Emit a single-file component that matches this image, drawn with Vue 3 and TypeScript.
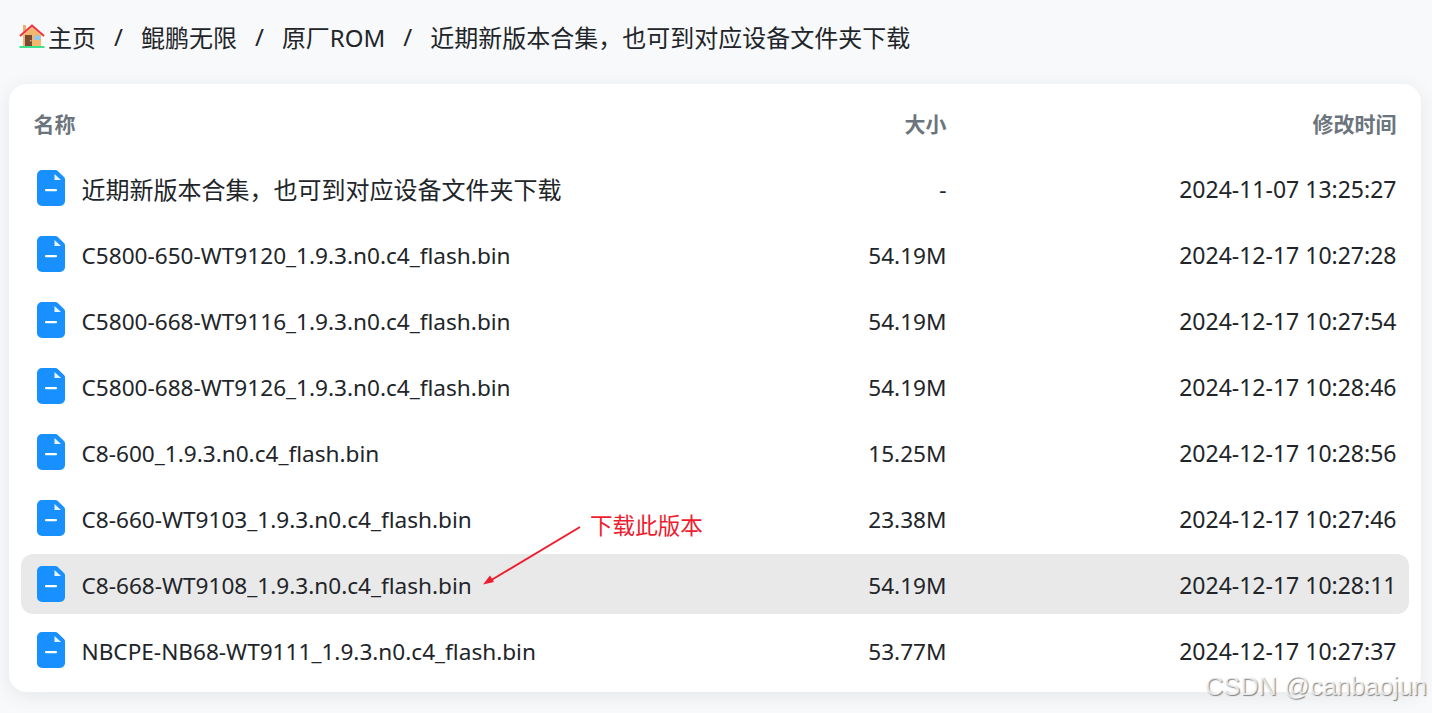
<template>
  <div class="page">
    <nav class="crumbs">
      <svg class="home" viewBox="0 0 26 26" aria-hidden="true">
        <rect x="4" y="2" width="3" height="8" fill="#e8b06c" />
        <path d="M4 12 13 4l9 8v11H4z" fill="#f0b86f" />
        <path d="M1 13 13 2.500 25 13" fill="none" stroke="#f4303c" stroke-width="2" />
        <rect x="6" y="12" width="7" height="11" fill="#7a4a34" />
        <rect x="11" y="17" width="1.400" height="1.400" fill="#e8c090" />
        <rect x="15.500" y="12.500" width="5.500" height="4.500" fill="#8ec8f0" />
        <rect x="0.500" y="23" width="25" height="2" fill="#3fe08c" />
      </svg>
      <template v-for="(crumb, i) in crumbs" :key="crumb">
        <span v-if="i > 0" class="sep">/</span>
        <span>{{ crumb }}</span>
      </template>
    </nav>

    <section class="card">
      <div class="row head">
        <span>名称</span>
        <span class="right">大小</span>
        <span class="right">修改时间</span>
      </div>
      <div v-for="file in files" :key="file.name" class="row" :class="{ active: file.active }">
        <span class="name">
          <svg class="icon" viewBox="0 0 28 36" aria-hidden="true">
            <path d="M5 0h13.500a3 3 0 0 1 2 .8l6.500 6.300a3 3 0 0 1 1 2.200V31a5 5 0 0 1-5 5H5a5 5 0 0 1-5-5V5a5 5 0 0 1 5-5z" fill="#1890ff" />
            <path d="M17.500 4v6h6.500z" fill="#fff" opacity=".9" />
            <rect x="8" y="19" width="12" height="2.200" rx="1" fill="#fff" />
          </svg>
          <span :class="{ cjk: file.size === '-' }">{{ file.name }}</span>
        </span>
        <span class="right size">{{ file.size }}</span>
        <span class="right">{{ file.time }}</span>
      </div>
    </section>

    <svg class="arrow" viewBox="0 0 110 70" aria-hidden="true">
      <path d="M98 6 6 61" stroke="#ee1c2e" stroke-width="2" fill="none" />
      <path d="M1 63.500 8 54.500 12 61z" fill="#ee1c2e" />
    </svg>
    <span class="note">下载此版本</span>
    <span class="mark">CSDN @canbaojun</span>
  </div>
</template>

<script setup lang="ts">
type FileRow = {
  name: string
  size: string
  time: string
  active?: boolean
}

const latest = '近期新版本合集\uFF0C也可到对应设备文件夹下载'

const crumbs = ['主页', '鲲鹏无限', '原厂ROM', latest]

const files: FileRow[] = [
  { name: latest, size: '-', time: '2024-11-07 13:25:27' },
  { name: 'C5800-650-WT9120_1.9.3.n0.c4_flash.bin', size: '54.19M', time: '2024-12-17 10:27:28' },
  { name: 'C5800-668-WT9116_1.9.3.n0.c4_flash.bin', size: '54.19M', time: '2024-12-17 10:27:54' },
  { name: 'C5800-688-WT9126_1.9.3.n0.c4_flash.bin', size: '54.19M', time: '2024-12-17 10:28:46' },
  { name: 'C8-600_1.9.3.n0.c4_flash.bin', size: '15.25M', time: '2024-12-17 10:28:56' },
  { name: 'C8-660-WT9103_1.9.3.n0.c4_flash.bin', size: '23.38M', time: '2024-12-17 10:27:46' },
  { name: 'C8-668-WT9108_1.9.3.n0.c4_flash.bin', size: '54.19M', time: '2024-12-17 10:28:11', active: true },
  { name: 'NBCPE-NB68-WT9111_1.9.3.n0.c4_flash.bin', size: '53.77M', time: '2024-12-17 10:27:37' }
]
</script>

<style>
html, body { background: #f8f9fa; overflow: hidden; }
</style>

<style scoped>
.page {
  position: relative;
  box-sizing: border-box;
  height: 713px;
  padding: 0 11px 0 9px;
  font-family: "Noto Sans", "Noto Sans CJK SC", sans-serif;
  font-size: 23px;
  color: #212529;
  overflow: hidden;
}

.crumbs {
  display: flex;
  align-items: center;
  height: 72px;
  padding: 0 0 0 10px;
  box-sizing: border-box;
  font-size: 24px;
}
.home { width: 26px; height: 26px; margin-right: 3px; }
.sep { margin: 0 18px; }

.card {
  margin-top: 12px;
  padding: 12px;
  display: grid;
  gap: 6px;
  background: #fff;
  border-radius: 18px;
  box-shadow: 0 4px 20px rgba(0, 0, 0, .08);
}

.row {
  box-sizing: border-box;
  display: grid;
  grid-template-columns: minmax(0, 1fr) 200px 450px;
  align-items: center;
  height: 60px;
  padding: 2px 12.500px 0 13px;
  border-radius: 12px;
}
.row.active { background: #e9e9e9; }
.head { height: 56px; padding: 0 12.500px 2px 12.500px; font-size: 21px; font-weight: 700; color: #6c757d; }
.right { text-align: right; }
.size { font-size: 22.600px; }
.name { display: flex; align-items: center; gap: 16.500px; font-size: 22.600px; }
.name .cjk { font-size: 24px; margin-top: -2px; }
.icon { width: 28px; height: 36px; margin: -2px 0 0 3px; flex: none; }

.arrow { position: absolute; left: 482px; top: 521px; width: 110px; height: 70px; }
.note { position: absolute; left: 590px; top: 508px; font-size: 22.600px; color: #ee1c2e; }
.mark {
  position: absolute;
  left: 1205px;
  top: 672px;
  font-family: "Liberation Sans", Arial, sans-serif;
  font-size: 25.400px;
  color: rgba(255, 255, 255, .75);
  text-shadow: 1px 1px 1px rgba(90, 90, 90, .7);
  white-space: nowrap;
}
</style>
